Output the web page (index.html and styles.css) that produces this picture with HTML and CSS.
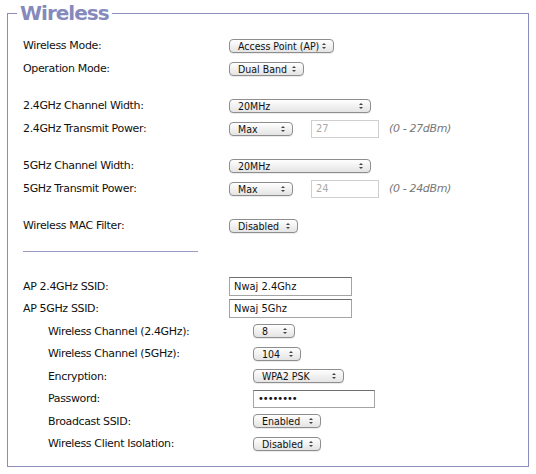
FILE: index.html
```html
<!DOCTYPE html>
<html lang="en">

<head>
    <meta charset="UTF-8">
    <meta name="viewport" content="width=device-width, initial-scale=1.0">
    <title>Wireless</title>
    <link rel="stylesheet" href="styles.css">
</head>

<body>

    <fieldset class="panel">
        <legend>Wireless</legend>

        <div class="content">
            <div class="group">
                <div class="row">
                    <label>Wireless Mode:</label>
                    <div class="select sel-mode">Access Point (AP)</div>
                </div>
                <div class="row">
                    <label>Operation Mode:</label>
                    <div class="select sel-band">Dual Band</div>
                </div>
            </div>

            <div class="group">
                <div class="row">
                    <label>2.4GHz Channel Width:</label>
                    <div class="select sel-width">20MHz</div>
                </div>
                <div class="row">
                    <label>2.4GHz Transmit Power:</label>
                    <div class="select sel-power">Max</div>
                    <input class="text power" type="text" value="27" disabled>
                    <span class="hint">(0 - 27dBm)</span>
                </div>
            </div>

            <div class="group">
                <div class="row">
                    <label>5GHz Channel Width:</label>
                    <div class="select sel-width">20MHz</div>
                </div>
                <div class="row">
                    <label>5GHz Transmit Power:</label>
                    <div class="select sel-power">Max</div>
                    <input class="text power" type="text" value="24" disabled>
                    <span class="hint">(0 - 24dBm)</span>
                </div>
            </div>

            <div class="group">
                <div class="row">
                    <label>Wireless MAC Filter:</label>
                    <div class="select sel-filter">Disabled</div>
                </div>
            </div>

            <hr class="divider">

            <div class="group">
                <div class="row tall">
                    <label>AP 2.4GHz SSID:</label>
                    <input class="text ssid" type="text" value="Nwaj 2.4Ghz">
                </div>
                <div class="row tall">
                    <label>AP 5GHz SSID:</label>
                    <input class="text ssid" type="text" value="Nwaj 5Ghz">
                </div>

                <!-- 子项 -->
                <div class="row sub">
                    <label>Wireless Channel (2.4GHz):</label>
                    <div class="select sel-ch">8</div>
                </div>
                <div class="row sub">
                    <label>Wireless Channel (5GHz):</label>
                    <div class="select sel-ch5">104</div>
                </div>
                <div class="row sub">
                    <label>Encryption:</label>
                    <div class="select sel-enc">WPA2 PSK</div>
                </div>
                <div class="row sub">
                    <label>Password:</label>
                    <input class="text pass" type="password" value="password">
                </div>
                <div class="row sub">
                    <label>Broadcast SSID:</label>
                    <div class="select sel-onoff">Enabled</div>
                </div>
                <div class="row sub">
                    <label>Wireless Client Isolation:</label>
                    <div class="select sel-onoff">Disabled</div>
                </div>
            </div>
        </div>
    </fieldset>

</body>

</html>
```

FILE: styles.css
```css
* {
    padding: 0;
    margin: 0;
    box-sizing: border-box;
}

body {
    padding: 2px 7px 0 7px;
    background-color: #fff;
    font-family: "DejaVu Sans", Verdana, sans-serif;
    font-size: 11px;
    letter-spacing: -0.35px;
    color: #111;
}

.panel {
    height: 465px;
    border: 1px solid #8b8dbf;
    padding: 10px 0 0 0;
}

.panel legend {
    margin-left: 9px;
    padding: 0 3px;
    font-size: 20px;
    font-weight: bold;
    letter-spacing: -1px;
    color: #8589bb;
    line-height: 22px;
}

.content {
    padding-left: 15px;
}

.group {
    margin-bottom: 14px;
}

.row {
    height: 23px;
    display: flex;
    align-items: center;
}

.row label {
    width: 206px;
    flex: none;
}

.row.sub {
    height: 22.5px;
    padding-left: 25px;
}

.row.sub label {
    width: 205px;
}

.row.tall {
    height: 22.5px;
}

/* 下拉框 */
.select {
    height: 14px;
    border: 1px solid #8e8e8e;
    border-radius: 4px;
    background: linear-gradient(#ffffff, #f1f1f1 50%, #e4e4e4);
    font-family: "DejaVu Sans Condensed", "DejaVu Sans", sans-serif;
    font-size: 10.5px;
    letter-spacing: 0;
    line-height: 12px;
    padding-left: 8px;
    position: relative;
    box-shadow: 0 1px 0 rgba(0, 0, 0, 0.08);
}

.select::before,
.select::after {
    content: "";
    position: absolute;
    right: 7px;
    width: 0;
    height: 0;
    border-left: 2px solid transparent;
    border-right: 2px solid transparent;
}

.select::before {
    top: 3px;
    border-bottom: 2px solid #444;
}

.select::after {
    top: 7px;
    border-top: 2px solid #444;
}

.sel-mode { width: 105px; }
.sel-band { width: 75px; }
.sel-width { width: 142px; }
.sel-power { width: 64px; }
.sel-filter { width: 69px; }
.sel-ch { width: 42px; }
.sel-ch5 { width: 48px; }
.sel-enc { width: 91px; }
.sel-onoff { width: 68px; }

/* 文本框 */
.text {
    height: 18px;
    border: 1px solid #a4a4a4;
    border-top-color: #6f6f6f;
    font-family: "DejaVu Sans Condensed", "DejaVu Sans", sans-serif;
    font-size: 11px;
    padding: 0 4px;
    color: #111;
    background-color: #fff;
}

.text.power {
    width: 68px;
    margin-left: 18px;
    border-color: #cfcfcf;
    color: #aaa;
}

.hint {
    margin-left: 10px;
    font-style: italic;
    color: #777;
}

.text.ssid {
    width: 123px;
    height: 19px;
}

.text.pass {
    width: 122px;
    letter-spacing: -1px;
}

.divider {
    width: 175px;
    margin: 2px 0 23px 0;
    border: none;
    border-top: 1px solid #9a9cc6;
}
```
